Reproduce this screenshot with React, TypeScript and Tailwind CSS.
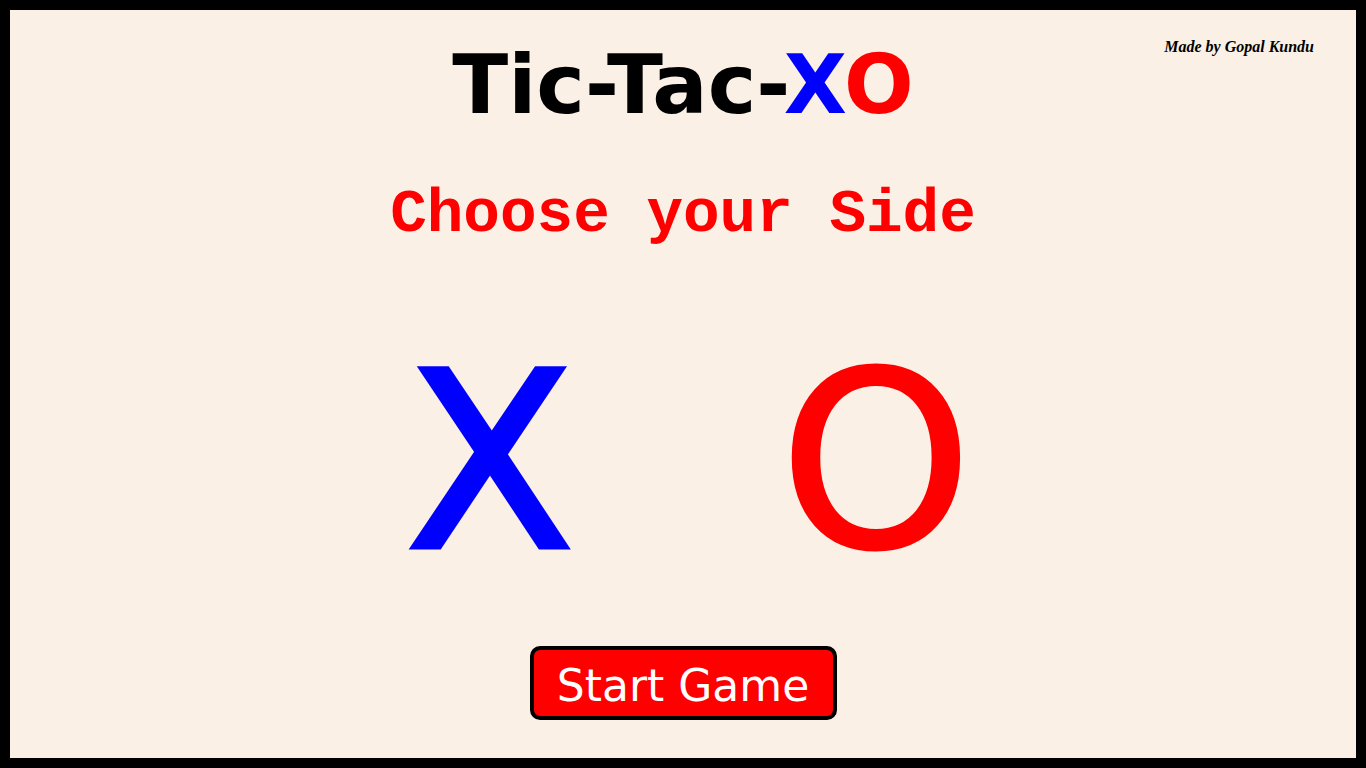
import React, { useState } from 'react'

const comic = { fontFamily: '"Comic Sans MS", "DejaVu Sans", sans-serif' }

export default function App() {
  const [side, setSide] = useState<'X' | 'O' | null>(null)

  return (
    <div className="relative flex h-screen w-full flex-col items-center border-[10px] border-black bg-[#faf0e6]">
      {/* credit */}
      <p className="absolute right-[42px] top-[25px] font-['Liberation_Serif',serif] text-[16px] font-bold italic text-black">
        Made by Gopal Kundu
      </p>

      <h1 style={comic} className="mt-[34px] text-[82px] font-bold leading-none text-black">
        Tic-Tac-<span className="text-[#0000ff]">X</span>
        <span className="text-[#ff0000]">O</span>
      </h1>

      <h2 className="mt-[58px] font-['Liberation_Mono',monospace] text-[61px] font-bold leading-none text-[#ff0000]">
        Choose your Side
      </h2>

      {/* pick a side */}
      <div style={comic} className="mt-[95px] flex items-center gap-[186px] text-[245px] leading-none">
        <button
          onClick={() => setSide('X')}
          className={
            side === 'X'
              ? 'w-[200px] text-center text-[#0000ff] opacity-70 [-webkit-text-stroke:5px_#0000ff]'
              : 'w-[200px] text-center text-[#0000ff] [-webkit-text-stroke:5px_#0000ff]'
          }
        >
          X
        </button>
        <button
          onClick={() => setSide('O')}
          className={
            side === 'O'
              ? 'w-[200px] text-center text-[#ff0000] opacity-70 [-webkit-text-stroke:3px_#ff0000]'
              : 'w-[200px] text-center text-[#ff0000] [-webkit-text-stroke:3px_#ff0000]'
          }
        >
          O
        </button>
      </div>

      <button
        style={comic}
        className="mt-auto mb-[38px] h-[74px] w-[307px] rounded-[10px] border-4 border-black bg-[#ff0000] pt-[6px] text-[44px] leading-none text-white"
      >
        Start Game
      </button>
    </div>
  )
}
